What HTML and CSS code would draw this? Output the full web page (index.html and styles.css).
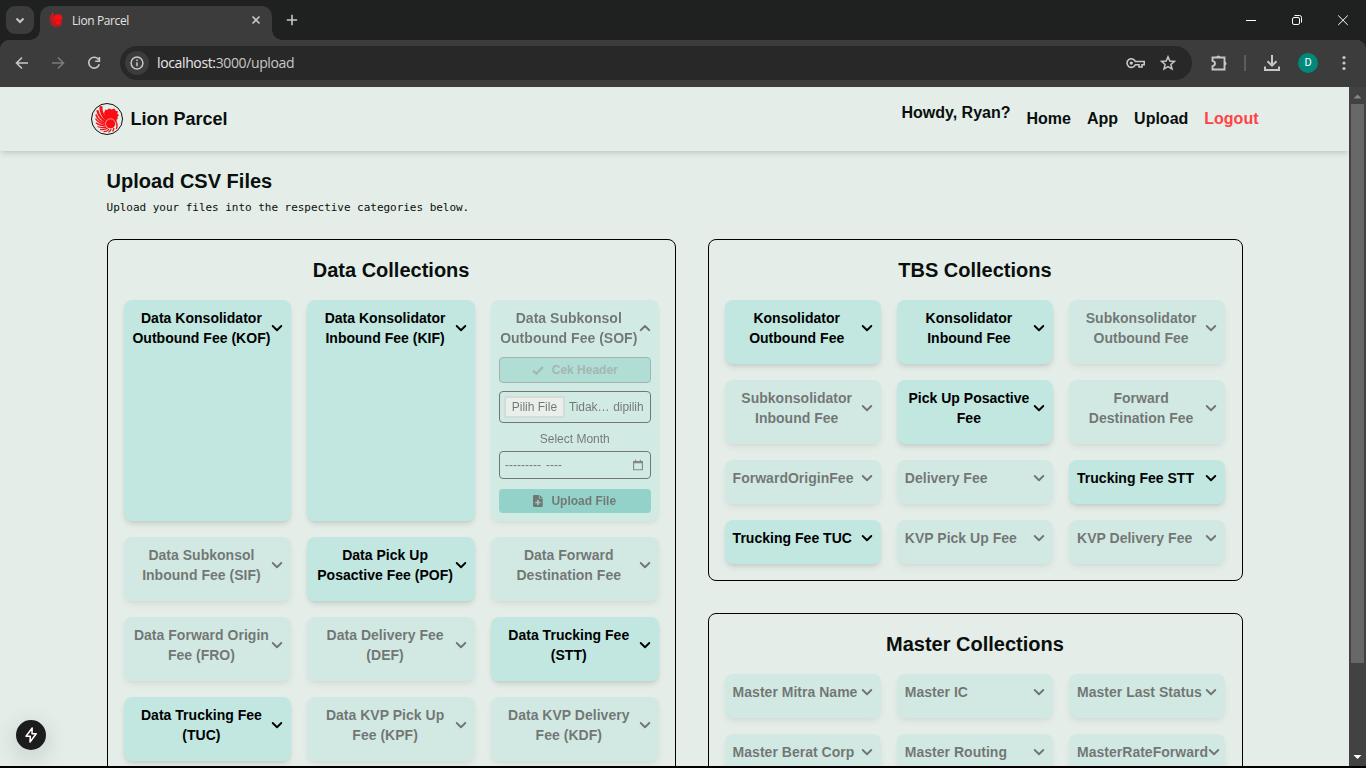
FILE: index.html
```html
<!DOCTYPE html>
<html lang="id">
<head>
<meta charset="utf-8">
<title>Lion Parcel</title>
<link rel="stylesheet" href="styles.css">
</head>
<body>
<svg class="defs" width="0" height="0">
  <symbol id="lion" viewBox="0 0 32 32">
    <g fill="none" stroke="#fb0d14" stroke-linecap="butt">
      <path d="M10 3.200C9.500 8.500 11.500 13 16 17" stroke-width="3"/>
      <path d="M6.300 7.200C7.500 12 10 16.200 15.500 19" stroke-width="2.200"/>
      <path d="M4.900 11.500C6.500 16 10 19 15 20.500" stroke-width="1.700"/>
      <path d="M4.500 15.700C7 19.200 10 21 15 21.700" stroke-width="1.400"/>
      <path d="M5 19.700C8 22.200 11 23 15 22.800" stroke-width="1.300"/>
      <path d="M6.500 23.500C9.500 24.900 12 24.900 15.500 24" stroke-width="1.300"/>
      <path d="M9 26.300C12 27 14.500 26.500 16.800 25" stroke-width="1.300"/>
      <path d="M12.500 28.700C15.500 28.600 17 27.700 18 26" stroke-width="1.300"/>
      <path d="M17.500 29.200C19 28.500 19.800 27.700 20 26M21.500 28.400C22.500 27.500 22.800 27 22.800 25M25.300 26C26.500 23.500 26.200 20.500 24 18" stroke-width="1.400"/>
    </g>
    <path fill="#fb0d14" d="M13 10L14.500 6.500L16 7L18 5.500L20.500 6.500L23.500 5.500L24.500 7.500L27 8.500L26.300 10.500L28 12.500L26.500 13.500L26.800 15.500L25.500 17L26 19L16 17.500L14 14Z"/>
    <circle cx="19.500" cy="20.800" r="5" fill="#fb0d14" stroke="currentColor" stroke-width=".6"/>
  </symbol>
  <symbol id="down" viewBox="0 0 12 14"><path d="M1.700 5L6 9.200L10.300 5" fill="none" stroke="currentColor" stroke-width="1.900" stroke-linecap="round" stroke-linejoin="round"/></symbol>
  <symbol id="up" viewBox="0 0 12 14"><path d="M1.700 9.200L6 5L10.300 9.200" fill="none" stroke="currentColor" stroke-width="1.900" stroke-linecap="round" stroke-linejoin="round"/></symbol>
</svg>

<div class="tabstrip">
  <div class="tab-search"><svg width="28" height="28" viewBox="0 0 28 28"><path d="M10.500 12.500L14 16L17.500 12.500" class="line bold"/></svg></div>
  <div class="tab">
    <svg class="favicon" width="14" height="16" viewBox="3.500 2 25 28"><use href="#lion" width="32" height="32"/></svg>
    <span class="tab-title">Lion Parcel</span>
    <svg width="10" height="10" viewBox="0 0 10 10"><path d="M1.500 1.500L8.500 8.500M8.500 1.500L1.500 8.500" class="line"/></svg>
  </div>
  <svg class="new-tab" width="12" height="12" viewBox="0 0 12 12"><path d="M6 .8V11.200M.8 6H11.200" class="line"/></svg>
  <div class="window-buttons">
    <svg width="46" height="40" viewBox="0 0 46 40"><path d="M18 20.500H28" class="thin"/></svg>
    <svg width="46" height="40" viewBox="0 0 46 40"><rect x="18.500" y="17.500" width="7" height="7" rx="1.500" class="thin"/><path d="M20.500 15.500H25.500Q27.500 15.500 27.500 17.500V22.500" class="thin"/></svg>
    <svg width="46" height="40" viewBox="0 0 46 40"><path d="M18.200 15.500L27.800 25M27.800 15.500L18.200 25" class="thin"/></svg>
  </div>
</div>

<div class="toolbar">
  <svg class="nav-icon" width="16" height="16" viewBox="0 0 16 16"><path d="M14 8H3M8 2.500L2.500 8L8 13.500" class="line"/></svg>
  <svg class="nav-icon faded" width="16" height="16" viewBox="0 0 16 16"><path d="M2 8H13M8 2.500L13.500 8L8 13.500" class="line"/></svg>
  <svg class="nav-icon" width="16" height="16" viewBox="0 0 16 16"><path d="M12.600 4.600A5.400 5.400 0 1 0 13.300 9.300M13.400 2V6.200H9.200" class="line"/></svg>
  <div class="address">
    <span class="site-info"><svg width="14" height="14" viewBox="0 0 14 14"><circle cx="7" cy="7" r="5.900" class="line info"/><path d="M7 6.300V10.300M7 3.600V5.100" class="line info"/></svg></span>
    <span class="url"><b>localhost:</b>3000/upload</span>
    <svg class="key" width="20" height="14" viewBox="0 0 20 14"><path d="M9.300 5.500A4.300 4.300 0 1 0 9.300 8.700H13V11H16V8.700H18.200V5.500Z" class="line"/><circle cx="5.300" cy="7.100" r="1.700" fill="#c7c7c7"/></svg>
    <svg class="star" width="16" height="16" viewBox="0 0 16 16"><path d="M8 1.800L9.800 6L14.400 6.400L10.900 9.400L12 13.900L8 11.500L4 13.900L5.100 9.400L1.600 6.400L6.200 6Z" class="line star-line"/></svg>
  </div>
  <svg class="puzzle" width="18" height="18" viewBox="0 0 18 18"><path d="M2.500 3.500H14.500V15.500H2.500V12.200Q5 11.500 5 9.500Q5 7.500 2.500 6.800Z" class="line puzzle-line"/><path d="M6.300 3.500A2 2 0 0 1 10.300 3.500ZM14.500 7.500A2 2 0 0 1 14.500 11.500Z" fill="#c7c7c7"/></svg>
  <span class="divider"></span>
  <svg class="download" width="18" height="18" viewBox="0 0 18 18"><path d="M9 1V11.500M4.500 7.200L9 11.700L13.500 7.200M2 12.500V16H16V12.500" class="line bold"/></svg>
  <span class="avatar">D</span>
  <svg class="menu" width="4" height="16" viewBox="0 0 4 16"><g fill="#c7c7c7"><circle cx="2" cy="2.500" r="1.600"/><circle cx="2" cy="8" r="1.600"/><circle cx="2" cy="13.500" r="1.600"/></g></svg>
</div>

<div class="viewport">
  <div class="page">
    <header class="site-header">
      <span class="logo"><svg width="32" height="32"><use href="#lion"/></svg></span>
      <span class="brand">Lion Parcel</span>
      <nav class="site-nav">
        <span class="greeting">Howdy, Ryan?</span>
        <a>Home</a><a>App</a><a>Upload</a><a class="logout">Logout</a>
      </nav>
    </header>
    <main class="content">
      <h1>Upload CSV Files</h1>
      <p class="intro">Upload your files into the respective categories below.</p>
      <div class="collections">
        <section class="panel">
          <h2>Data Collections</h2>
          <div class="cards">
            <div class="card"><div class="card-head"><span>Data Konsolidator<br>Outbound Fee (KOF)</span><svg><use href="#down"/></svg></div></div>
            <div class="card"><div class="card-head"><span>Data Konsolidator<br>Inbound Fee (KIF)</span><svg><use href="#down"/></svg></div></div>
            <div class="card off">
              <div class="card-head"><span>Data Subkonsol<br>Outbound Fee (SOF)</span><svg><use href="#up"/></svg></div>
              <div class="form">
                <div class="check-button"><svg width="12" height="12" viewBox="0 0 12 12"><path d="M1 6.500L4.300 9.700L11 3" fill="none" stroke="currentColor" stroke-width="2.200"/></svg>Cek Header</div>
                <div class="file-input"><span class="file-button">Pilih File</span><span class="file-name"><i>Tidak…</i><i>dipilih</i></span></div>
                <div class="month-label">Select Month</div>
                <div class="month-input"><span class="month-blank">---------</span><span class="month-blank">----</span><svg width="12" height="12" viewBox="0 0 12 12"><path d="M1.600 2.500H10.400V10.800H1.600Z" fill="none" stroke="#222" stroke-width="1.100"/><path d="M1.200 2H10.800V4.200H1.200ZM3 .8H4.200V2.500H3ZM7.800 .8H9V2.500H7.800Z" fill="#222"/></svg></div>
                <div class="upload-button"><svg width="10" height="12" viewBox="0 0 10 12"><path fill="currentColor" fill-rule="evenodd" d="M1 0H6V3.600H9.700V11Q9.700 12 8.700 12H1Q0 12 0 11V1Q0 0 1 0ZM6.700 0L9.700 3H6.700ZM4.200 4.800V6.700H2.300V8.200H4.200V10.200H5.700V8.200H7.600V6.700H5.700V4.800Z"/></svg>Upload File</div>
              </div>
            </div>
            <div class="card off"><div class="card-head"><span>Data Subkonsol<br>Inbound Fee (SIF)</span><svg><use href="#down"/></svg></div></div>
            <div class="card"><div class="card-head"><span>Data Pick Up<br>Posactive Fee (POF)</span><svg><use href="#down"/></svg></div></div>
            <div class="card off"><div class="card-head"><span>Data Forward<br>Destination Fee</span><svg><use href="#down"/></svg></div></div>
            <div class="card off"><div class="card-head"><span>Data Forward Origin<br>Fee (FRO)</span><svg><use href="#down"/></svg></div></div>
            <div class="card off"><div class="card-head"><span>Data Delivery Fee<br>(DEF)</span><svg><use href="#down"/></svg></div></div>
            <div class="card"><div class="card-head"><span>Data Trucking Fee<br>(STT)</span><svg><use href="#down"/></svg></div></div>
            <div class="card"><div class="card-head"><span>Data Trucking Fee<br>(TUC)</span><svg><use href="#down"/></svg></div></div>
            <div class="card off"><div class="card-head"><span>Data KVP Pick Up<br>Fee (KPF)</span><svg><use href="#down"/></svg></div></div>
            <div class="card off"><div class="card-head"><span>Data KVP Delivery<br>Fee (KDF)</span><svg><use href="#down"/></svg></div></div>
          </div>
        </section>
        <div class="side">
          <section class="panel">
            <h2>TBS Collections</h2>
            <div class="cards">
              <div class="card"><div class="card-head"><span>Konsolidator<br>Outbound Fee</span><svg><use href="#down"/></svg></div></div>
              <div class="card"><div class="card-head"><span>Konsolidator<br>Inbound Fee</span><svg><use href="#down"/></svg></div></div>
              <div class="card off"><div class="card-head"><span>Subkonsolidator<br>Outbound Fee</span><svg><use href="#down"/></svg></div></div>
              <div class="card off"><div class="card-head"><span>Subkonsolidator<br>Inbound Fee</span><svg><use href="#down"/></svg></div></div>
              <div class="card"><div class="card-head"><span>Pick Up Posactive<br>Fee</span><svg><use href="#down"/></svg></div></div>
              <div class="card off"><div class="card-head"><span>Forward<br>Destination Fee</span><svg><use href="#down"/></svg></div></div>
              <div class="card off"><div class="card-head single"><span>ForwardOriginFee</span><svg><use href="#down"/></svg></div></div>
              <div class="card off"><div class="card-head single"><span>Delivery Fee</span><svg><use href="#down"/></svg></div></div>
              <div class="card"><div class="card-head single"><span>Trucking Fee STT</span><svg><use href="#down"/></svg></div></div>
              <div class="card"><div class="card-head single"><span>Trucking Fee TUC</span><svg><use href="#down"/></svg></div></div>
              <div class="card off"><div class="card-head single"><span>KVP Pick Up Fee</span><svg><use href="#down"/></svg></div></div>
              <div class="card off"><div class="card-head single"><span>KVP Delivery Fee</span><svg><use href="#down"/></svg></div></div>
            </div>
          </section>
          <section class="panel">
            <h2>Master Collections</h2>
            <div class="cards">
              <div class="card off"><div class="card-head single"><span>Master Mitra Name</span><svg><use href="#down"/></svg></div></div>
              <div class="card off"><div class="card-head single"><span>Master IC</span><svg><use href="#down"/></svg></div></div>
              <div class="card off"><div class="card-head single"><span>Master Last Status</span><svg><use href="#down"/></svg></div></div>
              <div class="card off"><div class="card-head single"><span>Master Berat Corp</span><svg><use href="#down"/></svg></div></div>
              <div class="card off"><div class="card-head single"><span>Master Routing</span><svg><use href="#down"/></svg></div></div>
              <div class="card off"><div class="card-head single"><span>MasterRateForward</span><svg><use href="#down"/></svg></div></div>
            </div>
          </section>
        </div>
      </div>
    </main>
    <div class="dev-badge"><svg width="30" height="30" viewBox="0 0 30 30"><path d="M16.200 8L10 16.200H14.300L14 22L20.200 13.700H16Z" fill="none" stroke="#fff" stroke-width="1.500" stroke-linejoin="round"/></svg></div>
  </div>
  <div class="scrollbar">
    <svg width="17" height="17" viewBox="0 0 17 17"><path d="M4.500 11.500L8.500 7.500L12.500 11.500Z" fill="#868686"/></svg>
    <div class="thumb"></div>
    <svg class="scroll-down" width="17" height="17" viewBox="0 0 17 17"><path d="M4.500 6L8.500 10L12.500 6Z" fill="#fff"/></svg>
  </div>
</div>
</body>
</html>
```

FILE: styles.css
```css
* { box-sizing: border-box; }
body {
  margin: 0;
  width: 1366px;
  height: 768px;
  overflow: hidden;
  background: #000;
  font-family: "Liberation Sans", Arial, sans-serif;
  display: flex;
  flex-direction: column;
}
svg { display: block; flex: none; }
.defs { display: none; }
.line { fill: none; stroke: #c7c7c7; stroke-width: 1.6; }
.bold { stroke-width: 2; }
.info { stroke-width: 1.5; }
.star-line { stroke-width: 1.5; }
.puzzle-line { stroke-width: 1.9; }
.thin { fill: none; stroke: #fff; stroke-width: 1; }

/* Browser tab strip */
.tabstrip {
  height: 40px;
  flex: none;
  background: #1f2020;
  display: flex;
  align-items: center;
  padding-left: 6px;
}
.tab-search { width: 28px; height: 28px; border-radius: 9px; background: #3c3c3c; }
.tab {
  position: relative;
  align-self: flex-end;
  width: 232px;
  height: 34px;
  margin-left: 6px;
  padding: 0 11px 6px 9px;
  border-radius: 10px 10px 0 0;
  background: #3c3c3c;
  display: flex;
  align-items: center;
}
.tab::before, .tab::after {
  content: "";
  position: absolute;
  bottom: 0;
  width: 10px;
  height: 10px;
}
.tab::before { left: -10px; background: radial-gradient(circle at 0 0, transparent 9.500px, #3c3c3c 10px); }
.tab::after { right: -10px; background: radial-gradient(circle at 100% 0, transparent 9.500px, #3c3c3c 10px); }
.favicon { color: #8a2326; }
.tab-title {
  flex: 1;
  padding: 1px 0 0 9px;
  font: 12px/16px "Open Sans", "Noto Sans", sans-serif;
  letter-spacing: -0.4px;
  color: #e3e3e3;
}
.new-tab { margin-left: 14px; }
.window-buttons { display: flex; margin-left: auto; }

/* Browser toolbar */
.toolbar {
  height: 47px;
  flex: none;
  background: radial-gradient(circle at 10px 10px, #3c3c3c 10px, #1f2020 10.500px) 0 0 / 10px 10px no-repeat,
    radial-gradient(circle at 0 10px, #3c3c3c 10px, #1f2020 10.500px) 100% 0 / 10px 10px no-repeat,
    linear-gradient(#3c3c3c, #3c3c3c) 50% 0 / 1346px 10px no-repeat,
    linear-gradient(#3c3c3c, #3c3c3c) 0 10px / 100% 37px no-repeat;
  display: flex;
  align-items: center;
  padding: 0 20px 1px 14px;
}
.nav-icon { margin-right: 20px; }
.faded { opacity: .45; }
.address {
  width: 1072px;
  height: 34px;
  margin-left: -2px;
  border-radius: 17px;
  background: #282828;
  display: flex;
  align-items: center;
  padding: 0 16px 0 5px;
}
.site-info {
  width: 24px;
  height: 24px;
  border-radius: 50%;
  background: #3c3c3c;
  display: flex;
  align-items: center;
  justify-content: center;
}
.url {
  margin-left: 8px;
  font: 14px/20px "Open Sans", "Noto Sans", sans-serif;
  letter-spacing: -0.37px;
  color: #c7c7c7;
}
.url b { font-weight: 400; color: #e8e8e8; }
.key { margin-left: auto; }
.star { margin-left: 14px; }
.puzzle { margin-left: 18px; }
.divider { width: 2px; height: 16px; margin-left: 16px; background: #5c5c5c; }
.download { margin-left: 17px; }
.avatar {
  width: 20px;
  height: 20px;
  margin-left: 17px;
  border-radius: 50%;
  background: #00897b;
  color: #fff;
  font: 11px/20px Roboto, sans-serif;
  text-align: center;
}
.menu { margin-left: auto; }

/* Page viewport */
.viewport { height: 679px; flex: none; display: flex; overflow: hidden; }
.page { position: relative; width: 1349px; background: #e4ede8; overflow: hidden; color: #0a0f0d; }
.scrollbar { width: 17px; background: #424242; display: flex; flex-direction: column; align-items: center; }
.thumb { width: 13px; height: 559px; background: #686868; }
.scroll-down { margin-top: auto; }

.site-header {
  height: 64px;
  padding: 0 90.5px 0 91px;
  display: flex;
  align-items: center;
  box-shadow: 0 4px 6px -1px rgba(0,0,0,.1), 0 2px 4px -2px rgba(0,0,0,.1);
}
.logo { width: 32px; height: 32px; border: 1px solid #111; border-radius: 50%; color: #e4ede8; }
.logo svg { margin: -1px; }
.brand { margin-left: 7.5px; font-size: 18px; font-weight: 700; }
.site-nav { margin-left: auto; display: flex; gap: 16px; font-size: 16px; font-weight: 700; line-height: 24px; }
.greeting { margin-top: -6px; padding-bottom: 6px; }
.logout { color: #ff4245; }

.content { padding: 16px 106px 0 106.6px; }
h1 { margin: 0; font-size: 20px; line-height: 28px; }
.intro {
  margin: 5px 0 23px;
  font: 11px/16px "DejaVu Sans Mono", monospace;
  letter-spacing: -0.03px;
}
.collections { display: grid; grid-template-columns: 569px 535px; gap: 32px; align-items: start; }
.side { display: grid; gap: 32px; }
.panel { border: 1px solid #000; border-radius: 8px; padding: 16px; }
.side .panel { padding-right: 16.4px; }
h2 { margin: 0 0 16px; font-size: 20px; line-height: 28px; text-align: center; }
.cards { display: grid; grid-template-columns: repeat(3, minmax(0, 1fr)); gap: 16px; }
.card {
  padding: 8px;
  border-radius: 8px;
  background: #c1e7e0;
  color: #000;
  box-shadow: 0 4px 6px -1px rgba(0,0,0,.1), 0 2px 4px -2px rgba(0,0,0,.1);
}
.off { opacity: .5; }
.card-head {
  display: flex;
  align-items: center;
  justify-content: space-between;
  margin-bottom: 8px;
  font-size: 14px;
  font-weight: 700;
  line-height: 20px;
  letter-spacing: .02px;
  white-space: nowrap;
}
.card-head span { flex: 1; text-align: center; }
.card-head.single span { flex: none; }
.card-head svg { width: 12px; height: 14px; }

/* Upload form */
.form { margin-top: 9px; font-size: 12px; line-height: 16px; }
.check-button, .upload-button {
  display: flex;
  align-items: center;
  justify-content: center;
  gap: 8px;
  border-radius: 4px;
  font-weight: 700;
}
.check-button { height: 26px; border: 1px solid #4f5e5a; background: #6bc9b8; color: #4f6660; opacity: .8; }
.file-input {
  height: 32px;
  margin-top: 8px;
  padding: 0 6px 0 4px;
  border: 1px solid #000;
  border-radius: 4px;
  display: flex;
  align-items: center;
}
.file-button { width: 61px; height: 22px; line-height: 18px; border: 2px solid #c6c8c7; border-radius: 3px; background: #f0f0f0; text-align: center; }
.file-name { flex: 1; margin-left: 4px; display: flex; justify-content: space-between; letter-spacing: -.05px; }
.file-name i { font-style: normal; }
.month-label { margin: 8px 0 4px; text-align: center; }
.month-input {
  height: 28px;
  padding: 0 6px 0 5px;
  border: 1px solid #000;
  border-radius: 4px;
  display: flex;
  align-items: center;
  gap: 5px;
}
.month-input svg { margin-left: auto; }
.upload-button { height: 24px; margin-top: 10px; background: #40b7a8; }

.dev-badge {
  position: absolute;
  left: 16px;
  bottom: 16px;
  width: 30px;
  height: 30px;
  border-radius: 50%;
  background: #1c1c1f;
  box-shadow: 0 6px 24px rgba(0,0,0,.16);
}
```
